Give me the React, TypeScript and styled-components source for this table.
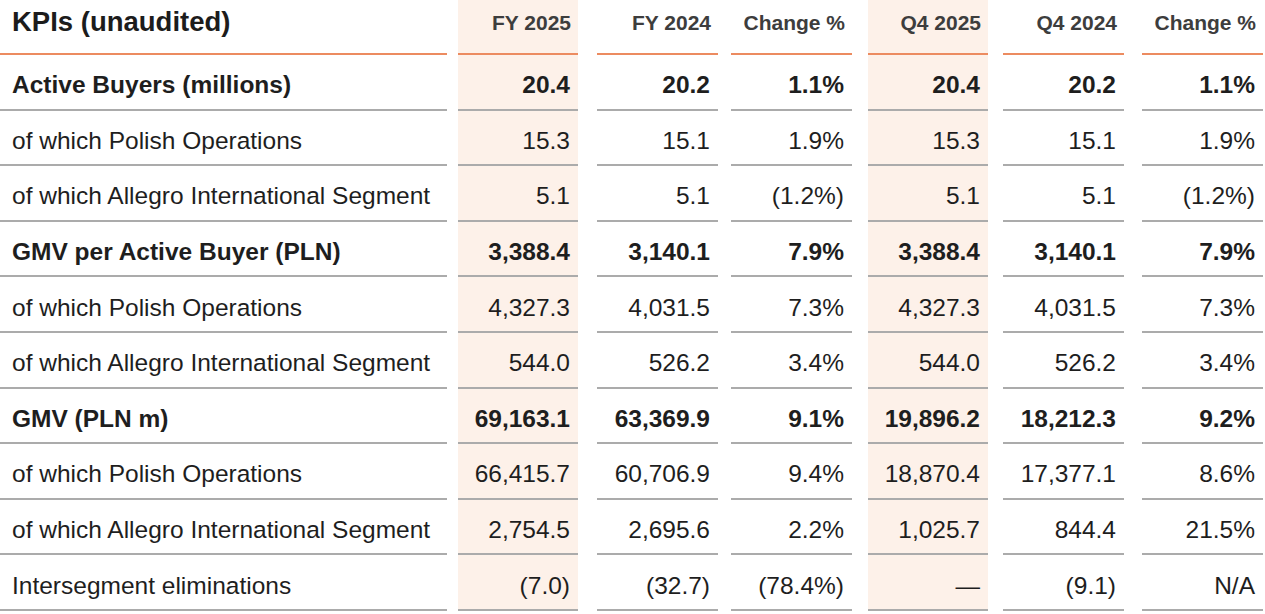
import React from "react";
import styled, { createGlobalStyle, css } from "styled-components";

const Global = createGlobalStyle`
  html, body { margin: 0; padding: 0; background: #ffffff; }
  body { font-family: "Liberation Sans", Arial, sans-serif; color: #1e1e1e; }
`;

type Col = { label: string; gap: number; track: number; shaded?: boolean };

const COLS: Col[] = [
  { label: "FY 2025", gap: 11, track: 131, shaded: true },
  { label: "FY 2024", gap: 19, track: 140 },
  { label: "Change %", gap: 13, track: 134 },
  { label: "Q4 2025", gap: 16, track: 136, shaded: true },
  { label: "Q4 2024", gap: 15, track: 136 },
  { label: "Change %", gap: 18, track: 139 },
];

type Row = { label: string; bold?: boolean; values: string[] };

const ROWS: Row[] = [
  { label: "Active Buyers (millions)", bold: true, values: ["20.4", "20.2", "1.1%", "20.4", "20.2", "1.1%"] },
  { label: "of which Polish Operations", values: ["15.3", "15.1", "1.9%", "15.3", "15.1", "1.9%"] },
  { label: "of which Allegro International Segment", values: ["5.1", "5.1", "(1.2%)", "5.1", "5.1", "(1.2%)"] },
  { label: "GMV per Active Buyer (PLN)", bold: true, values: ["3,388.4", "3,140.1", "7.9%", "3,388.4", "3,140.1", "7.9%"] },
  { label: "of which Polish Operations", values: ["4,327.3", "4,031.5", "7.3%", "4,327.3", "4,031.5", "7.3%"] },
  { label: "of which Allegro International Segment", values: ["544.0", "526.2", "3.4%", "544.0", "526.2", "3.4%"] },
  { label: "GMV (PLN m)", bold: true, values: ["69,163.1", "63,369.9", "9.1%", "19,896.2", "18,212.3", "9.2%"] },
  { label: "of which Polish Operations", values: ["66,415.7", "60,706.9", "9.4%", "18,870.4", "17,377.1", "8.6%"] },
  { label: "of which Allegro International Segment", values: ["2,754.5", "2,695.6", "2.2%", "1,025.7", "844.4", "21.5%"] },
  { label: "Intersegment eliminations", values: ["(7.0)", "(32.7)", "(78.4%)", "\u2014", "(9.1)", "N/A"] },
];

const Table = styled.div`
  display: grid;
  grid-template-columns: 447px ${COLS.map((c) => `${c.track}px`).join(" ")};
  grid-template-rows: 55px repeat(${ROWS.length}, 55.6px);
  width: 1263px;
`;

const cellBase = css<{ $gap?: number; $shaded?: boolean }>`
  display: flex;
  align-items: center;
  box-sizing: border-box;
  margin-left: ${(p) => p.$gap ?? 0}px;
  background: ${(p) => (p.$shaded ? "#fdf1e9" : "transparent")};
  white-space: nowrap;
`;

const TitleCell = styled.div`
  ${cellBase};
  padding: 0 0 9px 12px;
  border-bottom: 2px solid #ec8b60;
  font-size: 27.5px;
  font-weight: 700;
  color: #1c1c1c;
`;

const HeadCell = styled.div<{ $gap?: number; $shaded?: boolean }>`
  ${cellBase};
  justify-content: flex-end;
  padding: 0 7px 7px 0;
  border-bottom: 2px solid #ec8b60;
  font-size: 21px;
  font-weight: 700;
  color: #3d3d3d;
`;

const LabelCell = styled.div<{ $bold?: boolean }>`
  ${cellBase};
  padding: 7px 0 0 12px;
  border-bottom: 2px solid #ababab;
  font-size: 24.5px;
  font-weight: ${(p) => (p.$bold ? 700 : 400)};
  color: #1e1e1e;
`;

const ValueCell = styled.div<{ $gap?: number; $shaded?: boolean; $bold?: boolean }>`
  ${cellBase};
  justify-content: flex-end;
  padding: 7px 8px 0 0;
  border-bottom: 2px solid #ababab;
  font-size: 24.5px;
  font-weight: ${(p) => (p.$bold ? 700 : 400)};
  color: #1e1e1e;
`;

export default function App() {
  return (
    <>
      <Global />
      <Table>
        <TitleCell>KPIs (unaudited)</TitleCell>
        {COLS.map((c, i) => (
          <HeadCell key={`h${i}`} $gap={c.gap} $shaded={c.shaded}>
            {c.label}
          </HeadCell>
        ))}
        {ROWS.map((r, ri) => (
          <React.Fragment key={`r${ri}`}>
            <LabelCell $bold={r.bold}>{r.label}</LabelCell>
            {r.values.map((v, vi) => (
              <ValueCell
                key={`v${ri}-${vi}`}
                $gap={COLS[vi].gap}
                $shaded={COLS[vi].shaded}
                $bold={r.bold}
              >
                {v}
              </ValueCell>
            ))}
          </React.Fragment>
        ))}
      </Table>
    </>
  );
}
